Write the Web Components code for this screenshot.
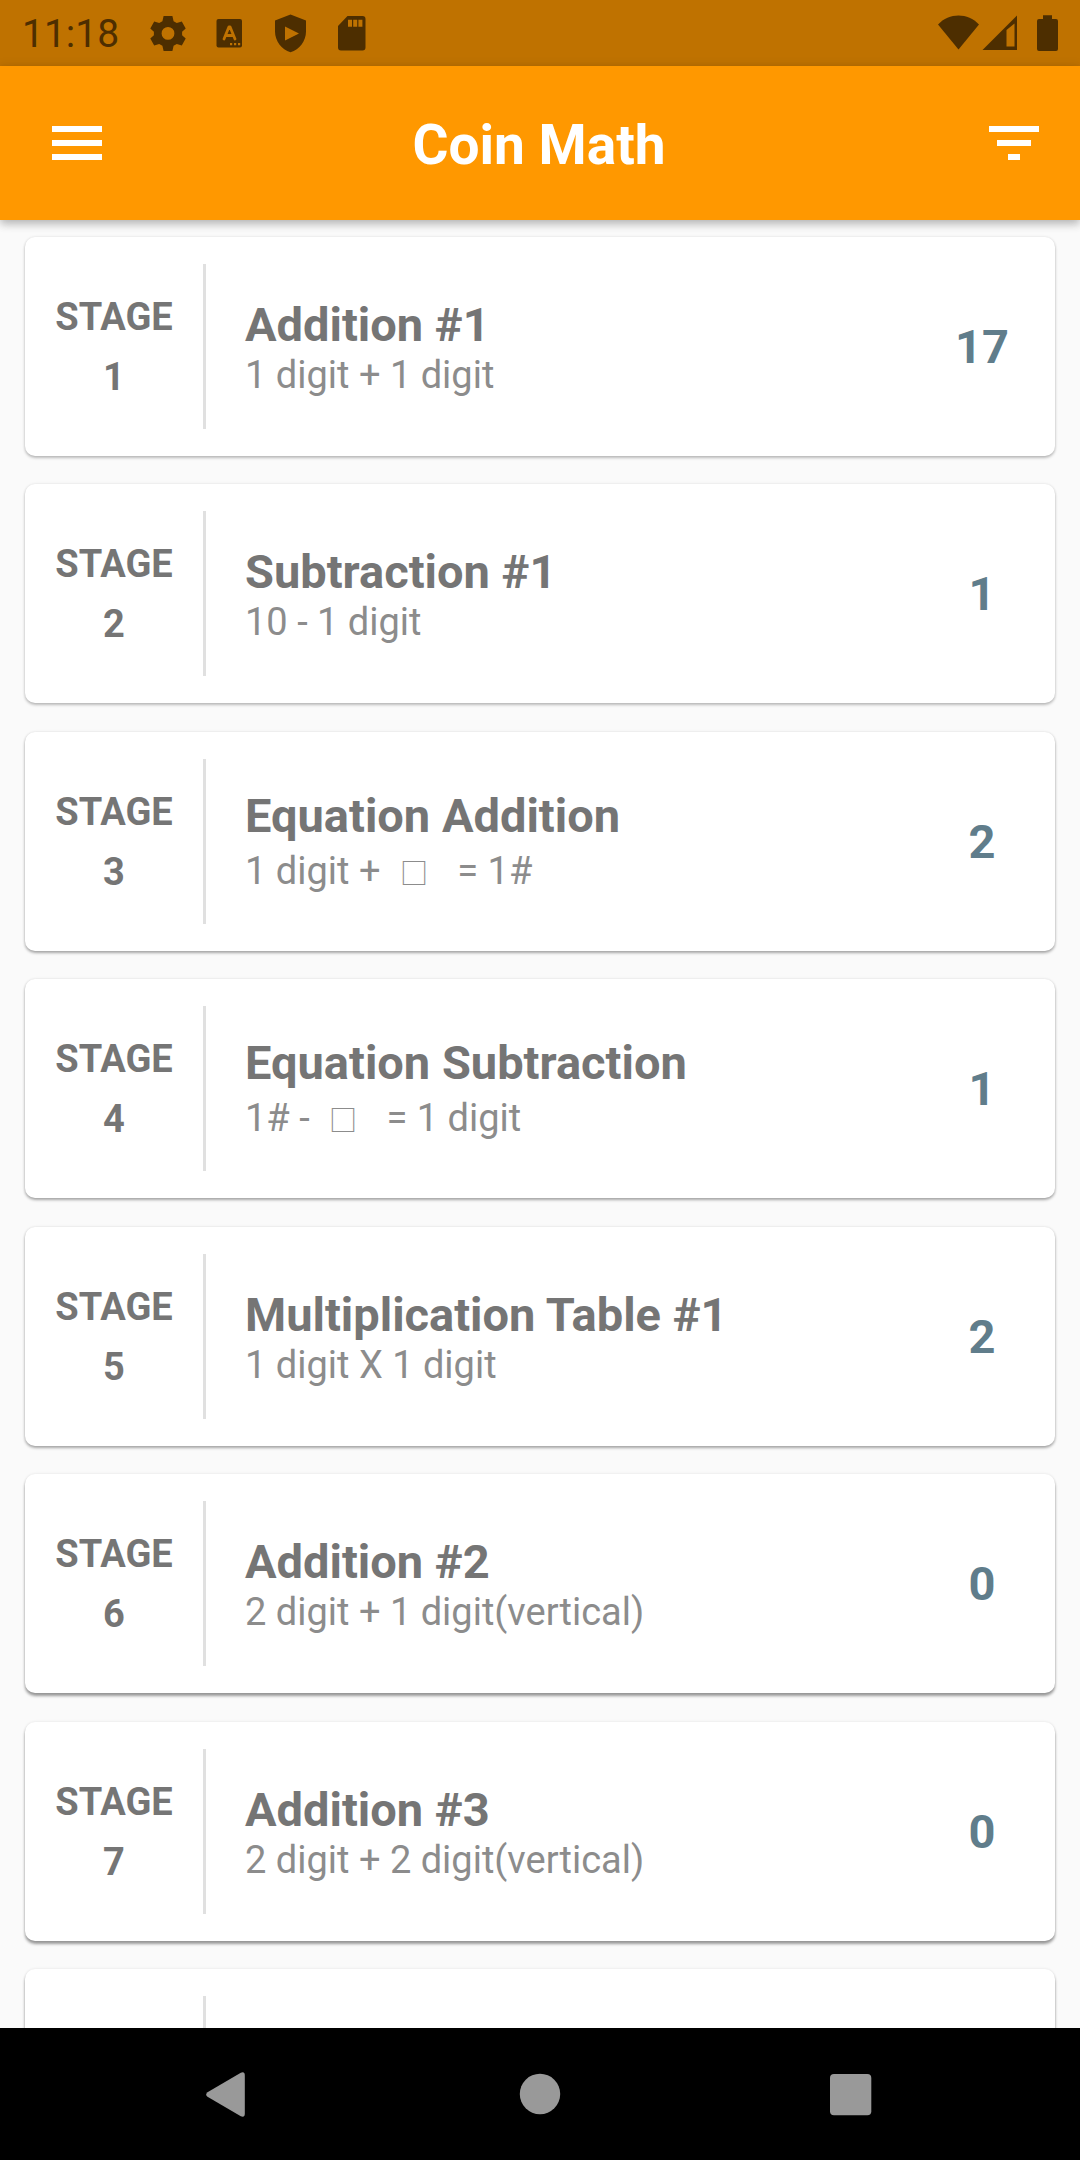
<!DOCTYPE html>
<html lang="en">
<head>
<meta charset="utf-8">
<meta name="viewport" content="width=device-width, initial-scale=1">
<title>Coin Math</title>
<style>
  html, body { margin: 0; height: 100%; }
  body { font-family: Roboto, "Noto Sans", sans-serif; background: #fafafa; color: #757575; }
</style>
</head>
<body>
<coin-app>
  <status-bar slot="status">11:18</status-bar>
  <app-bar slot="bar">Coin Math</app-bar>
  <stage-list>
    <stage-card number="1" score="17">Addition #1<span slot="detail">1 digit + 1 digit</span></stage-card>
    <stage-card number="2" score="1">Subtraction #1<span slot="detail">10 - 1 digit</span></stage-card>
    <stage-card number="3" score="2" equation>Equation Addition<span slot="detail">1 digit + <blank-box>□</blank-box> = 1#</span></stage-card>
    <stage-card number="4" score="1" equation>Equation Subtraction<span slot="detail">1# - <blank-box>□</blank-box> = 1 digit</span></stage-card>
    <stage-card number="5" score="2">Multiplication Table #1<span slot="detail">1 digit X 1 digit</span></stage-card>
    <stage-card number="6" score="0">Addition #2<span slot="detail">2 digit + 1 digit(vertical)</span></stage-card>
    <stage-card number="7" score="0">Addition #3<span slot="detail">2 digit + 2 digit(vertical)</span></stage-card>
    <stage-card></stage-card>
  </stage-list>
  <nav-bar slot="nav"></nav-bar>
</coin-app>

<script>
function define(name, html, setup) {
  const template = document.createElement('template');
  template.innerHTML = html;
  customElements.define(name, class extends HTMLElement {
    constructor() {
      super();
      this.attachShadow({ mode: 'open' }).append(template.content.cloneNode(true));
    }
    connectedCallback() { if (setup) setup(this, this.shadowRoot); }
  });
}

define('coin-app', `
  <style>
    :host { display: flex; flex-direction: column; height: 100vh; overflow: hidden; }
    main { flex: 1; min-height: 0; overflow: hidden; }
  </style>
  <slot name="status"></slot>
  <slot name="bar"></slot>
  <main><slot></slot></main>
  <slot name="nav"></slot>`);

define('status-bar', `
  <style>
    :host { display: flex; align-items: center; justify-content: space-between; height: 66px; flex: none;
      padding: 0 20px 0 22px; background: #bf7200; color: #4d2e00; font-size: 39px; line-height: 66px; }
    div { display: flex; align-items: center; }
    .left svg { margin-left: 11px; }
    .clock { padding: 2px 13px 0 0; line-height: 64px; }
    svg { display: block; fill: currentColor; flex: none; }
    .signal { margin-right: 3px; }
  </style>
  <div class="left">
    <span class="clock"><slot></slot></span>
    <svg width="50" height="66" viewBox="0 0 50 66" aria-hidden="true"><path fill-rule="evenodd" d="M20.6 16h8.800l1.200 5.200 3.200 1.900 5-1.700 3.900 7-3.600 3.300v3.600l3.600 3.300-3.900 7-5-1.700-3.200 1.900-1.200 5.200h-8.800l-1.200-5.200-3.200-1.900-5 1.700-3.900-7 3.600-3.300v-3.600l-3.600-3.300 3.900-7 5 1.700 3.200-1.900zM25 27a6.400 6.400 0 1 0 0 12.800a6.400 6.400 0 1 0 0-12.800z"/></svg>
    <svg width="50" height="66" viewBox="0 0 50 66" aria-hidden="true"><rect x="12.500" y="19" width="25.500" height="28.500" rx="2"/><path d="M20 39l5-12.200h1l5 12.200M21.800 35.500h7.400" fill="none" stroke="#bf7200" stroke-width="2.800" stroke-linecap="round" stroke-linejoin="round"/><path d="M26 43h2.200v2.200H26zM30 43h2.200v2.200H30zM34 43h2.200v2.200H34z" fill="#bf7200"/></svg>
    <svg width="50" height="66" viewBox="0 0 50 66" aria-hidden="true"><path fill-rule="evenodd" d="M25.500 14.500L41 20.500V31.500C41 41 34.500 49.500 25.500 52.200C16.500 49.500 10 41 10 31.500V20.500zM20 26.500V40.500L34 33.500z"/></svg>
    <svg width="50" height="66" viewBox="0 0 50 66" aria-hidden="true"><path fill-rule="evenodd" d="M21.500 16H36.500a3 3 0 0 1 3 3V47.500a3 3 0 0 1-3 3H15a3 3 0 0 1-3-3V26zM22 19.700v7h4v-7zM27.200 19.700v7h4v-7zM32.400 19.700v7h4v-7z"/></svg>
  </div>
  <div class="right">
    <svg width="44" height="66" viewBox="0 0 44 66" aria-hidden="true"><path d="M1 24.500C12 12.500 31 12.500 42 24.500L21.500 49.500z"/></svg>
    <svg class="signal" width="50" height="66" viewBox="0 0 50 66" aria-hidden="true"><path fill-rule="evenodd" d="M1.500 50L36 15.500V50zM25.500 30V46.500H33.500V23.500z"/></svg>
    <svg width="26" height="66" viewBox="0 0 26 66" aria-hidden="true"><path d="M9 15.200h9V19h4a2 2 0 0 1 2 2V49a2 2 0 0 1-2 2H5a2 2 0 0 1-2-2V21a2 2 0 0 1 2-2h4z"/></svg>
  </div>`);

define('app-bar', `
  <style>
    :host { display: flex; align-items: center; justify-content: space-between; height: 154px; flex: none;
      background: #ff9800; color: #fff; position: relative; z-index: 1;
      box-shadow: 0 4px 8px rgba(0,0,0,.2), 0 2px 12px rgba(0,0,0,.12); }
    h1 { flex: 1; margin: 0; padding: 4px 2px 0 0; text-align: center; font-size: 55px; line-height: 64px; font-weight: 700; }
    button { display: flex; align-items: center; justify-content: center; width: 154px; height: 154px; padding: 0;
      border: 0; background: none; color: inherit; }
    button:last-of-type { justify-content: flex-end; padding-right: 41px; }
    svg { display: block; fill: currentColor; }
  </style>
  <button type="button" aria-label="Menu"><svg width="50" height="34" viewBox="0 0 50 34"><path d="M0 0h50v6H0zM0 14h50v6H0zM0 28h50v6H0z"/></svg></button>
  <h1><slot></slot></h1>
  <button type="button" aria-label="Filter"><svg width="50" height="34" viewBox="0 0 50 34"><path d="M0 0h50v6H0zM8 14h34v6H8zM19 28h12v6H19z"/></svg></button>`);

define('stage-list', `
  <style>
    :host { display: flex; flex-direction: column; gap: 28px; padding: 17px 25px; }
    ::slotted(:nth-child(even)) { margin-bottom: 1px; }
    /* light comes from the top, so lower cards cast a stronger shadow */
    ::slotted(:nth-child(n+3)) { --drop: 2px; --shade: .32; }
    ::slotted(:nth-child(n+6)) { --drop: 3px; --shade: .38; }
  </style>
  <slot></slot>`);

define('stage-card', `
  <style>
    :host { display: flex; align-items: center; flex: none; height: 219px; border-radius: 10px; background: #fff;
      box-shadow: 0 var(--drop, 2px) 3px rgba(0,0,0,var(--shade, .24)), 0 0 3px rgba(0,0,0,.1); }
    .stage { width: 178px; text-align: center; font-size: 38px; line-height: 60px; font-weight: 700; }
    .stage div { min-height: 60px; }
    .text { align-self: stretch; flex: 1; margin: 27px 0; padding: 2px 0 0 39px; border-left: 3px solid #e0e0e0;
      display: flex; flex-direction: column; justify-content: center; }
    h2 { margin: 0; font-size: 47px; line-height: 55px; font-weight: 700; }
    p { margin: 0; font-size: 38px; line-height: 46px; color: #8c8c8c; }
    :host([equation]) p { padding: 5px 0 3px; }
    .score { width: 146px; text-align: center; font-size: 47px; line-height: 55px; font-weight: 700; color: #607d8b; }
  </style>
  <div class="stage"><div class="label"></div><div class="number"></div></div>
  <div class="text"><h2><slot></slot></h2><p><slot name="detail"></slot></p></div>
  <div class="score"></div>`, (host, root) => {
  const number = host.getAttribute('number');
  root.querySelector('.label').textContent = number ? 'STAGE' : '';
  root.querySelector('.number').textContent = number || '';
  root.querySelector('.score').textContent = host.getAttribute('score') || '';
});

define('blank-box', `
  <style>
    :host { display: inline-block; padding: 0 20px 0 10px; font-family: "Noto Sans CJK JP", sans-serif; font-size: 28px; line-height: 40px; }
  </style>
  <slot></slot>`);

define('nav-bar', `
  <style>
    :host { display: flex; justify-content: center; gap: 200px; height: 132px; flex: none; background: #000; }
    button { display: block; width: 110px; padding: 0; border: 0; background: none; color: #999; }
    svg { display: block; fill: currentColor; }
  </style>
  <button type="button" aria-label="Back"><svg width="110" height="132" viewBox="0 0 110 132"><path d="M32.500 64.200L65.800 44.700Q69.800 43 69.800 47.500V85.500Q69.800 90 65.800 88.300L32.500 68.800Q29.800 66.500 32.500 64.200z"/></svg></button>
  <button type="button" aria-label="Home"><svg width="110" height="132" viewBox="0 0 110 132"><circle cx="55" cy="66" r="20.200"/></svg></button>
  <button type="button" aria-label="Overview"><svg width="110" height="132" viewBox="0 0 110 132"><rect x="35" y="46" width="41.300" height="41.300" rx="4"/></svg></button>`);
</script>
</body>
</html>
